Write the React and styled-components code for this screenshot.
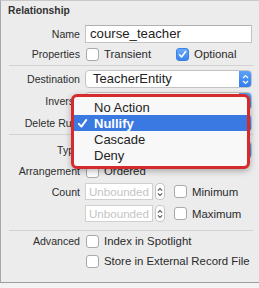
import styled, { createGlobalStyle } from 'styled-components';

const Global = createGlobalStyle`
    html, body {
        margin: 0;
        padding: 0;
        background: #f3f3f3;
    }
    body {
        font-family: "Liberation Sans", Arial, sans-serif;
        color: #2b2b2b;
    }
`

const Panel = styled.div`
    position: relative;
    width: 258px;
    height: 281px;
    background: #ececec;
    border-left: 1px solid #a8a8a8;
    border-top: 1px solid #c9c9c9;
    border-bottom: 1px solid #9d9d9d;
    box-sizing: content-box;
`

const Heading = styled.div`
    font-size: 10.3px;
    font-weight: bold;
    color: #333;
    padding: 3px 0 0 7px;
    height: 19px;
    line-height: 14px;
`

const Row = styled.div`
    display: grid;
    grid-template-columns: 79px 1fr;
    column-gap: 5px;
    align-items: center;
    height: ${p => p.h || 22}px;
`

const Label = styled.div`
    text-align: right;
    font-size: 10.6px;
    color: #2e2e2e;
    white-space: nowrap;
`

const Controls = styled.div`
    display: flex;
    align-items: center;
    padding-right: 7px;
`

const Separator = styled.div`
    height: 1px;
    background: #d2d2d2;
    margin: ${p => p.m || '2px 6px 2px 8px'};
`

const TextField = styled.div`
    flex: 1;
    height: 18px;
    box-sizing: border-box;
    background: #fff;
    border: 1px solid #c3c3c3;
    border-top-color: #b0b0b0;
    font-size: 13.2px;
    line-height: 16px;
    padding-left: 4px;
    color: #222;
`

const SmallField = styled(TextField)`
    flex: none;
    width: 68px;
    height: 17px;
    color: #c4c4c4;
    font-size: 11.6px;
    line-height: 15px;
    padding-left: 3px;
    border-color: #d0d0d0;
    white-space: nowrap;
    overflow: hidden;
`

const Check = styled.div`
    width: 11px;
    height: 11px;
    border-radius: 3px;
    border: 1px solid ${p => (p.on ? '#3c82e6' : '#a9a9a9')};
    background: ${p => (p.on ? 'linear-gradient(#6aa9f7, #3a85ee)' : '#fff')};
    display: flex;
    align-items: center;
    justify-content: center;
    flex: none;
`

const CheckItem = styled.div`
    display: flex;
    align-items: center;
    gap: 5px;
    font-size: 11.4px;
    color: #2a2a2a;
    white-space: nowrap;
    margin-left: ${p => p.ml || 1}px;
`

const Popup = styled.div`
    flex: 1;
    height: 18px;
    box-sizing: border-box;
    display: flex;
    border: 1px solid #c3c3c3;
    border-radius: 4px;
    background: #fff;
    overflow: hidden;
    font-size: 13px;
    line-height: 16px;
`

const PopupText = styled.div`
    flex: 1;
    padding-left: 7px;
    color: #222;
`

const PopupArrows = styled.div`
    width: 12px;
    background: linear-gradient(#5aa2f8, #2f7cef);
    display: flex;
    align-items: center;
    justify-content: center;
`

const Stepper = styled.div`
    width: 8px;
    height: 15px;
    margin-left: 2px;
    border: 1px solid #c6c6c6;
    border-radius: 4px;
    background: #fff;
    display: flex;
    align-items: center;
    justify-content: center;
    flex: none;
`

const Menu = styled.div`
    position: absolute;
    left: 70px;
    top: 93px;
    width: 173px;
    padding: 2px 0 3px;
    border: 3px solid #d72a2d;
    border-radius: 6px;
    background: #f8f8f8;
    box-shadow: 0 2px 6px rgba(0, 0, 0, 0.3);
`

const MenuItem = styled.div`
    height: 16px;
    display: flex;
    align-items: center;
    font-size: 13px;
    color: ${p => (p.active ? '#fff' : '#222')};
    background: ${p => (p.active ? '#3a78e2' : 'transparent')};
    font-weight: ${p => (p.active ? 'bold' : 'normal')};
`

const Tick = styled.div`
    width: 20px;
    padding-left: 3px;
    box-sizing: border-box;
    display: flex;
    align-items: center;
`

const Chevrons = ({ color = '#fff', w = 7, h = 11 }) => (
    <svg width={w} height={h} viewBox="0 0 7 11">
        <path d="M1 4 L3.5 1.5 L6 4 M1 7 L3.5 9.5 L6 7" fill="none" stroke={color} strokeWidth="1.2" />
    </svg>
)

const CheckMark = ({ color = '#fff', size = 9 }) => (
    <svg width={size} height={size} viewBox="0 0 9 9">
        <path d="M1.5 4.8 L3.6 7 L7.6 1.6" fill="none" stroke={color} strokeWidth="1.6" strokeLinecap="round" strokeLinejoin="round" />
    </svg>
)

const Box = ({ on, label, ml }) => (
    <CheckItem ml={ml}>
        <Check on={on}>{on && <CheckMark />}</Check>
        {label}
    </CheckItem>
)

// popups under the open menu are hidden, so they carry no visible value
const PopupButton = ({ value }) => (
    <Popup>
        <PopupText>{value}</PopupText>
        <PopupArrows>
            <Chevrons />
        </PopupArrows>
    </Popup>
)

const Counter = ({ label }) => (
    <Controls>
        <SmallField>Unbounded</SmallField>
        <Stepper>
            <Chevrons color="#555" w={6} h={10} />
        </Stepper>
        <CheckItem ml={9}>
            <Check />
            {label}
        </CheckItem>
    </Controls>
)

const menuItems = ['No Action', 'Nullify', 'Cascade', 'Deny']

const App = () => {
    return (
        <>
            <Global />
            <Panel>
                <Heading>Relationship</Heading>
                <Row h={22}>
                    <Label>Name</Label>
                    <Controls>
                        <TextField>course_teacher</TextField>
                    </Controls>
                </Row>
                <Row h={18}>
                    <Label>Properties</Label>
                    <Controls>
                        <Box label="Transient" />
                        <Box on label="Optional" ml={25} />
                    </Controls>
                </Row>
                <Separator m="2px 6px 2px 8px" />
                <Row h={22}>
                    <Label>Destination</Label>
                    <Controls>
                        <PopupButton value="TeacherEntity" />
                    </Controls>
                </Row>
                <Row h={22}>
                    <Label>Inverse</Label>
                    <Controls>
                        <PopupButton />
                    </Controls>
                </Row>
                <Row h={22}>
                    <Label>Delete Rule</Label>
                    <Controls>
                        <PopupButton />
                    </Controls>
                </Row>
                <Separator m="0 6px 4px 8px" />
                <Row h={22}>
                    <Label>Type</Label>
                    <Controls>
                        <PopupButton />
                    </Controls>
                </Row>
                <Row h={20}>
                    <Label>Arrangement</Label>
                    <Controls>
                        <Box label="Ordered" />
                    </Controls>
                </Row>
                <Row h={21}>
                    <Label>Count</Label>
                    <Counter label="Minimum" />
                </Row>
                <Row h={23}>
                    <Label />
                    <Counter label="Maximum" />
                </Row>
                <Separator m="5px 6px 0 8px" />
                <Row h={20}>
                    <Label>Advanced</Label>
                    <Controls>
                        <Box label="Index in Spotlight" />
                    </Controls>
                </Row>
                <Row h={20}>
                    <Label />
                    <Controls>
                        <Box label="Store in External Record File" />
                    </Controls>
                </Row>

                <Menu>
                    {menuItems.map(item => (
                        <MenuItem key={item} active={item === 'Nullify'}>
                            <Tick>{item === 'Nullify' && <CheckMark size={11} />}</Tick>
                            {item}
                        </MenuItem>
                    ))}
                </Menu>
            </Panel>
        </>
    );
};

export default App;
